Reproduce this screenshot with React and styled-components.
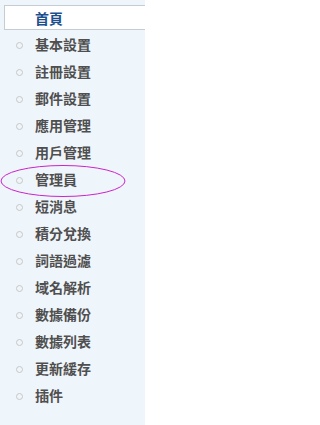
import React from 'react';
import styled, { createGlobalStyle } from 'styled-components';

const GlobalStyle = createGlobalStyle`
    html, body {
        margin: 0;
        padding: 0;
        background: #ffffff;
    }
`

const menuItems = [
    '基本設置', '註冊設置', '郵件設置', '應用管理', '用戶管理',
    '管理員', '短消息', '積分兌換', '詞語過濾', '域名解析',
    '數據備份', '數據列表', '更新緩存', '插件'
];

const Sidebar = styled.div`
    position: relative;
    width: 145px;
    height: 425px;
    background: #eff6fb;
    padding-top: 5px;
    box-sizing: border-box;
    font-family: "Noto Sans CJK TC", "Noto Sans CJK SC", sans-serif;
    font-weight: bold;
    font-size: 14px;
`

const MenuList = styled.ul`
    list-style: none;
    margin: 0;
    padding: 0;
    display: flex;
    flex-direction: column;
`

const HomeItem = styled.li`
    margin-left: 4px;
    height: 25px;
    box-sizing: border-box;
    background: #ffffff;
    border: 1px solid #c4ccd4;
    border-right: none;
    display: flex;
    align-items: center;
    padding-left: 30px;
    color: #1d4f8f;
`

const MenuItem = styled.li`
    height: 27px;
    display: flex;
    align-items: center;
    padding-left: 16px;
    color: #4f4f4f;
`

const Bullet = styled.span`
    width: 5px;
    height: 5px;
    border: 1px solid #c6c6c6;
    border-radius: 50%;
    margin-right: 12px;
    margin-top: 3px;
    flex-shrink: 0;
`

// hand-drawn annotation round 管理員
const Mark = styled.svg`
    position: absolute;
    left: 0;
    top: 164px;
    pointer-events: none;
`

const App = () => {
    return (
        <>
            <GlobalStyle />
            <Sidebar>
                <MenuList>
                    <HomeItem>首頁</HomeItem>
                    {menuItems.map(label => (
                        <MenuItem key={label}>
                            <Bullet />
                            {label}
                        </MenuItem>
                    ))}
                </MenuList>
                <Mark width="128" height="36" viewBox="0 0 128 36">
                    <ellipse cx="63" cy="17" rx="62" ry="15.5" fill="none" stroke="#cc22cc" strokeWidth="1" />
                </Mark>
            </Sidebar>
        </>
    )
}

export default App
